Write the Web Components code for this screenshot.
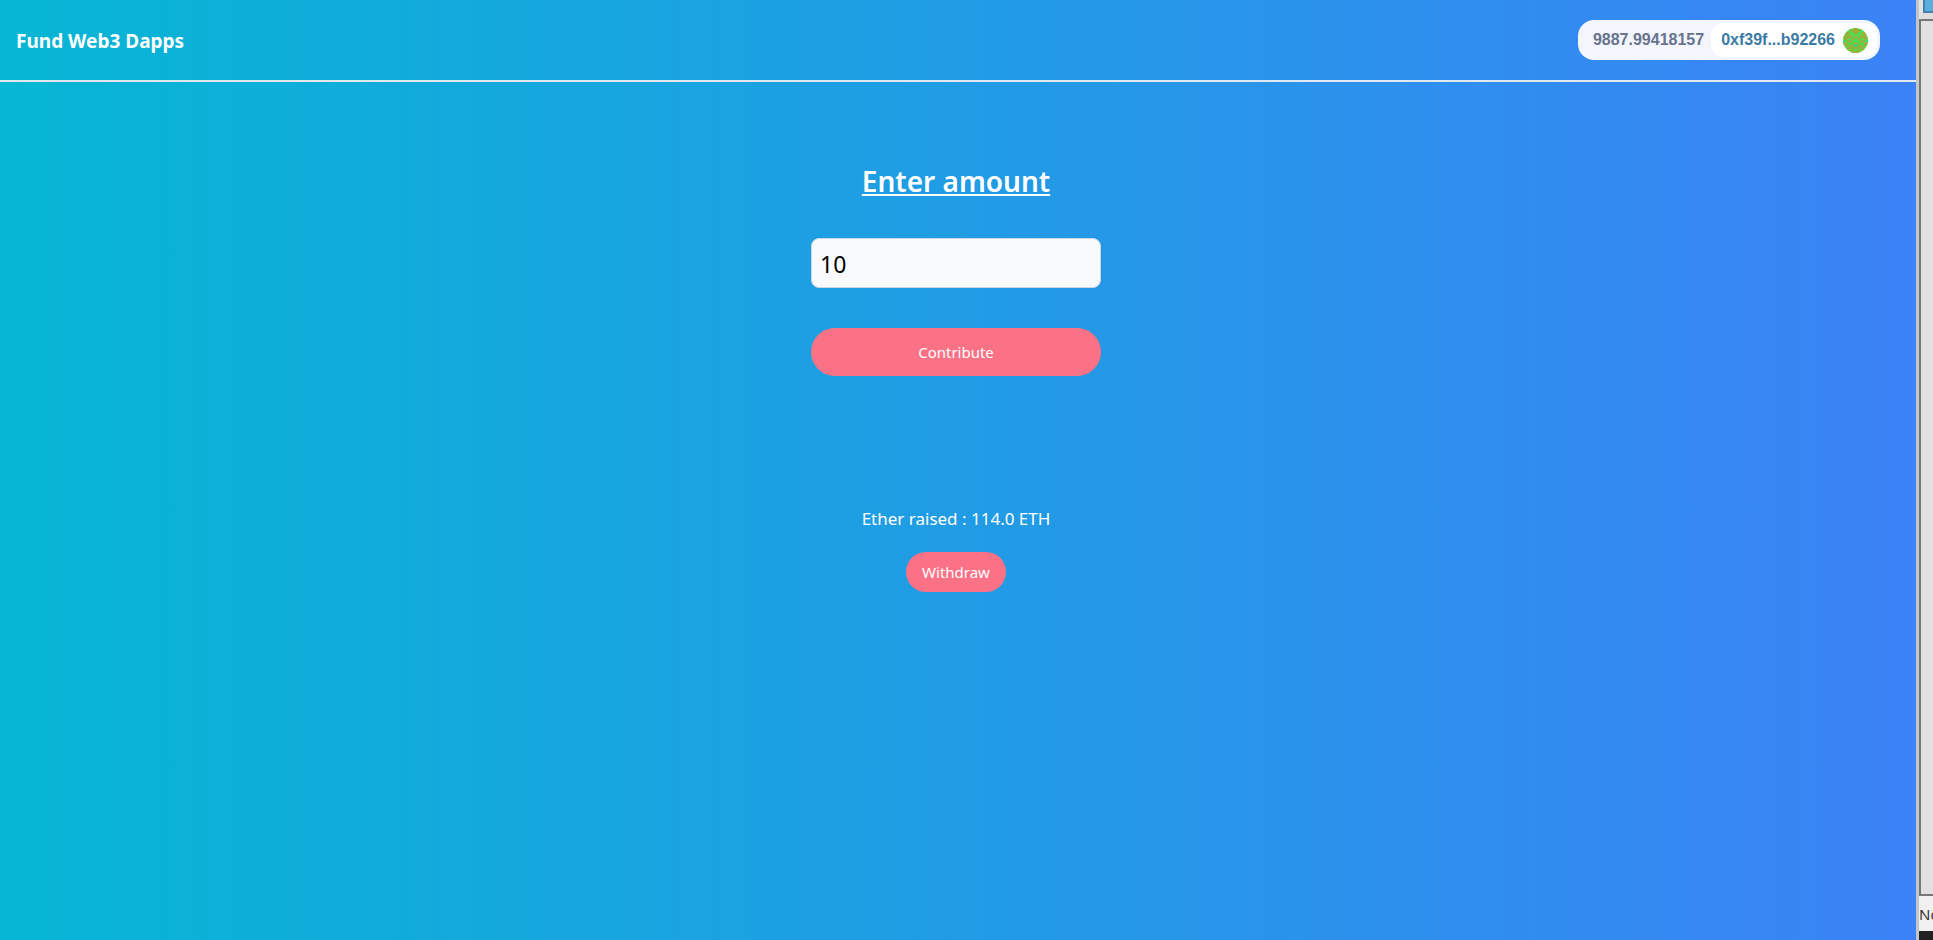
<!DOCTYPE html>
<html lang="en">
<head>
<meta charset="utf-8">
<title>Fund Web3 Dapps</title>
<style>
html, body { margin: 0; height: 100%; overflow: hidden; }
body { font-family: "Noto Sans", "Open Sans", sans-serif; color: #fff; }
</style>
</head>
<body>
<fund-app></fund-app>
<script>
function define(name, html, setup) {
  const t = document.createElement('template');
  t.innerHTML = html;
  customElements.define(name, class extends HTMLElement {
    constructor() {
      super();
      this.attachShadow({ mode: 'open' }).append(t.content.cloneNode(true));
      if (setup) setup(this.shadowRoot);
    }
  });
}

define('block-avatar', `
<style>
:host { display: block; width: 25px; height: 25px; border-radius: 50%; overflow: hidden; }
svg { display: block; width: 100%; height: 100%; }
</style>
<svg viewBox="0 0 12 12" aria-hidden="true"><rect width="12" height="12" fill="#48e052"/></svg>`,
root => {
  // Left half of the identicon; each row is mirrored to the right.
  const rows = ['..oo.o', '.o..oo', '.oo..o', '.o.o..', 'oooo.o', '.o..o.',
                'g.oo..', 'oo...o', '.o.oog', 'g.oo.o', '.oo.o.', '..o.oo'];
  const svg = root.querySelector('svg');
  rows.forEach((r, y) => [...r].forEach((c, x) => {
    if (c === '.') return;
    for (const px of [x, 11 - x]) {
      const b = document.createElementNS('http://www.w3.org/2000/svg', 'rect');
      b.setAttribute('x', px); b.setAttribute('y', y);
      b.setAttribute('width', 1); b.setAttribute('height', 1);
      b.setAttribute('fill', c === 'o' ? '#b2a332' : '#35d58a');
      svg.append(b);
    }
  }));
});

define('wallet-badge', `
<style>
:host { display: flex; align-items: center; height: 40px; box-sizing: border-box; padding: 3px 3px 3px 15px; gap: 7px;
  border-radius: 16px; background: #f3f6fd; font: bold 16px/20px "Liberation Sans", Arial, sans-serif; color: #68738d; }
button { display: flex; align-items: center; gap: 8px; height: 34px; border: 0; padding: 0 9px 0 10px; border-radius: 12px;
  background: #fff; font: inherit; color: #3a7ba5; }
</style>
<span><slot name="balance"></slot></span>
<button type="button"><slot name="address"></slot><block-avatar></block-avatar></button>`);

define('app-header', `
<style>
:host { display: flex; align-items: center; justify-content: space-between; box-sizing: border-box; height: 82px;
  padding: 0 36px 0 16px; border-bottom: 2px solid #e2e8f0; }
h1 { margin: 0; padding-top: 2px; font-size: 19px; line-height: 28px; font-weight: 700; }
</style>
<h1>Fund Web3 Dapps</h1>
<wallet-badge><span slot="balance">9887.99418157</span><span slot="address">0xf39f...b92266</span></wallet-badge>`);

define('pill-button', `
<style>
:host { display: block; }
button { display: block; width: 100%; border: 0; border-radius: 24px; padding: 8px 16px; background: #fb7185;
  color: #fff; font: inherit; font-size: 15px; line-height: 24px; }
:host([large]) button { padding: 12px 16px; }
</style>
<button type="button"><slot></slot></button>`);

define('fund-form', `
<style>
:host { display: flex; flex-direction: column; align-items: center; padding: 80px 4px 0 0; }
form { display: flex; flex-direction: column; width: 290px; }
label { text-align: center; font-size: 28px; line-height: 38px; font-weight: 600; text-decoration: underline;
  text-decoration-thickness: 2px; text-underline-offset: 2px; margin-bottom: 38px; }
input { box-sizing: border-box; width: 100%; height: 50px; margin: 0 0 40px; padding: 2px 8px 0; border: 1px solid #cbd5e1;
  border-radius: 8px; background: #f8fafc; color: #000; font: inherit; font-size: 23px; outline: 0; }
p { margin: 129px 0 19px; font-size: 17px; line-height: 28px; }
</style>
<form>
  <label for="amount">Enter amount</label>
  <input id="amount" type="text" inputmode="decimal" value="10">
  <pill-button large>Contribute</pill-button>
</form>
<p>Ether raised : 114.0 ETH</p>
<pill-button>Withdraw</pill-button>`);

define('side-window', `
<style>
:host { display: flex; flex-direction: column; width: 17px; box-sizing: border-box; overflow: hidden;
  background: #e3e3e3; border-left: 3px solid #c3c5c8; }
.icon { height: 13px; box-sizing: border-box; margin-left: 4px; border: solid #4680ad; border-width: 0 0 2px 2px; background: #59afe0; }
.bar { height: 6px; background: #dedede; }
.pane { flex: 1; border: solid #777; border-width: 2px 0 2px 2px; background: #e1e1e1; }
.label { height: 35px; background: #f0f0f0; color: #333; font-size: 15px; line-height: 36px; white-space: nowrap; }
.foot { height: 9px; background: #222; }
</style>
<div class="icon"></div><div class="bar"></div><div class="pane"></div><div class="label">No</div><div class="foot"></div>`);

define('fund-app', `
<style>
:host { display: flex; height: 100%; }
main { flex: 1; min-width: 0; background: linear-gradient(to right, #06b6d4, #3b82f6); }
</style>
<main><app-header></app-header><fund-form></fund-form></main>
<side-window></side-window>`);
</script>
</body>
</html>
